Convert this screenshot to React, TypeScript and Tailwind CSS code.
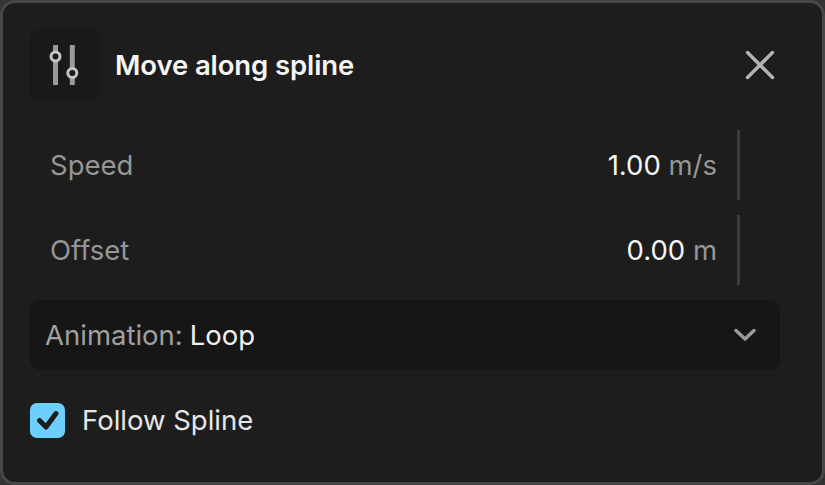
export default function App() {
  return (
    <div className="w-[825px] h-[485px] bg-[#333333]">
      <div className="w-[825px] h-[485px] bg-[#1d1d1d] border-[3px] border-[#474747] rounded-[15px] box-border pt-[27px] pl-[27px] pr-[42px] font-['Inter',sans-serif] text-[27.5px] flex flex-col overflow-hidden">
        <div className="flex items-center h-[70px]">
          <div className="w-[70px] h-[70px] rounded-[7px] bg-[#191919] flex items-center justify-center">
            <svg width="40" height="50" viewBox="0 0 40 50" fill="none" stroke="#9a9a9a">
              <path d="M10.5 5V45" strokeWidth="5" />
              <path d="M27.3 5V45" strokeWidth="5" />
              <circle cx="10.5" cy="16.5" r="4.5" fill="#1a1a1a" strokeWidth="3" stroke="#c4c4c4" />
              <circle cx="27.3" cy="33" r="4.5" fill="#1a1a1a" strokeWidth="3" stroke="#c4c4c4" />
            </svg>
          </div>
          <div className="ml-[15px] font-semibold tracking-[-0.1px] text-[#f5f5f5] leading-[72px]">Move along spline</div>
          <svg className="ml-auto mr-[5px]" width="30" height="30" viewBox="0 0 30 30" fill="none" stroke="#b3b3b3" strokeWidth="3.4" strokeLinecap="round">
            <path d="M2.5 2.5L27.5 27.5M27.5 2.5L2.5 27.5" />
          </svg>
        </div>
        <div className="mt-[30px] h-[70px] flex items-center">
          <div className="ml-[20px] pt-[2px] text-[#969696]">Speed</div>
          <div className="ml-auto pt-[2px] text-[#f5f5f5]">1.00 <span className="text-[#969696]">m/s</span></div>
          <div className="ml-5 mr-[40px] w-[3px] h-[70px] bg-[#3d3d3d]" />
        </div>
        <div className="mt-[15px] h-[70px] flex items-center">
          <div className="ml-[20px] pt-[2px] text-[#969696]">Offset</div>
          <div className="ml-auto pt-[2px] text-[#f5f5f5]">0.00 <span className="text-[#969696]">m</span></div>
          <div className="ml-5 mr-[40px] w-[3px] h-[70px] bg-[#3d3d3d]" />
        </div>
        <div className="mt-[15px] h-[70px] rounded-[10px] bg-[#161616] flex items-center pl-[15px] pr-4">
          <span className="pt-[2px] text-[#a0a0a0]">Animation:</span>
          <span className="pt-[2px] ml-[7px] text-[#f0f0f0]">Loop</span>
          <svg className="ml-auto mr-[7px]" width="24" height="16" viewBox="0 0 24 16" fill="none" stroke="#9a9a9a" strokeWidth="3.5" strokeLinecap="round" strokeLinejoin="round">
            <path d="M3 3.5L12 12L21 3.5" />
          </svg>
        </div>
        <div className="mt-[33px] flex items-center h-[35px]">
          <div className="w-[35px] h-[35px] rounded-[7px] bg-[#6dcfff] flex items-center justify-center">
            <svg width="24" height="20" viewBox="0 0 24 20" fill="none" stroke="#1d1d1d" strokeWidth="5" strokeLinecap="round" strokeLinejoin="round">
              <path d="M3.5 9.5L10 16L20 2.5" />
            </svg>
          </div>
          <span className="ml-[17px] text-[#e6e6e6]">Follow Spline</span>
        </div>
      </div>
    </div>
  );
}
